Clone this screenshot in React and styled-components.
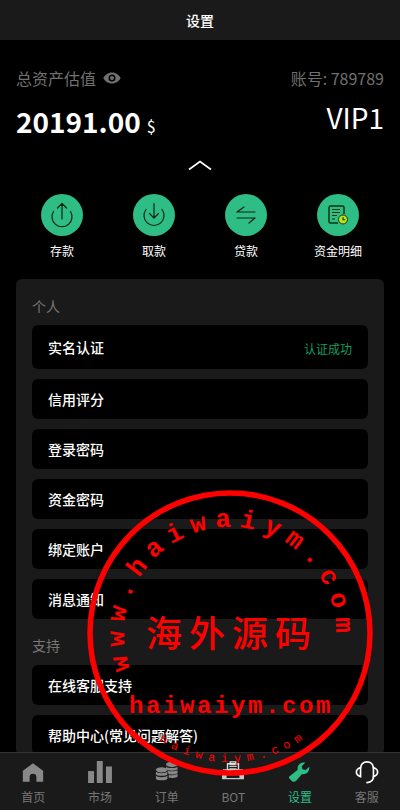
import React from "react";
import styled, { createGlobalStyle } from "styled-components";

const Global = createGlobalStyle`
  html, body { margin: 0; padding: 0; background: #000; }
  body { font-family: "Noto Sans CJK SC", "Noto Sans", sans-serif; }
  * { box-sizing: border-box; }
`;
const Page = styled.div`
  position: relative; width: 400px; height: 810px; overflow: hidden;
  display: flex; flex-direction: column; background: #000; color: #fff;
`;
const Header = styled.header`
  flex: none; height: 40px; background: #1a1a1a; display: flex; align-items: center; justify-content: center;
  font-size: 14px; font-weight: 500; color: #fff;
`;
const Main = styled.main`flex: 1; min-height: 0; overflow: hidden; padding: 0 16px;`;
const Summary = styled.section`display: flex; justify-content: space-between; padding-top: 25px;`;
const Column = styled.div`display: flex; flex-direction: column; align-items: ${p => p.$end ? "flex-end" : "flex-start"};`;
const Muted = styled.div`
  display: flex; align-items: center; gap: 7px; height: 26px; font-size: 16px; line-height: 26px; color: #707070;
`;
const Balance = styled.div`
  display: flex; align-items: baseline; gap: 6px; margin-top: 12px; height: 36px; line-height: 36px;
  font-size: 28px; font-weight: 700; color: #fff;
  small { font-size: 16px; font-weight: 400; }
`;
const Vip = styled.div`font-size: 28px; line-height: 36px; margin-top: 8px; color: #fff;`;
const Toggle = styled.div`display: flex; justify-content: center; margin-top: 20px; height: 12px;`;
const Actions = styled.nav`display: grid; grid-template-columns: repeat(4, 1fr); margin-top: 23px;`;
const Action = styled.div`display: flex; flex-direction: column; align-items: center; font-size: 12px; line-height: 18px; color: #fff;`;
const Circle = styled.div`
  width: 42px; height: 42px; border-radius: 50%; background: #2ebd85; display: flex; align-items: center; justify-content: center; margin-bottom: 6px;
`;
const Card = styled.section`
  margin-top: 19px; background: #1a1a1a; border-radius: 6px; padding: 17px 16px 0;
`;
const GroupTitle = styled.div`font-size: 14px; line-height: 20px; height: 20px; color: #777; margin-bottom: ${p => p.$gap ? "10px" : "9px"}; margin-top: ${p => p.$gap ? "16px" : "0"};`;
const Row = styled.div`
  display: flex; justify-content: space-between; align-items: center;
  height: ${p => p.$tall ? "44px" : "40px"}; margin-bottom: 10px; padding: 0 16px; background: #000; border-radius: 6px;
  font-size: 14px; font-weight: 500; color: #fff;
`;
const Status = styled.span`font-size: 12px; font-weight: 400; color: #0e9f63; margin-top: 3px;`;
const TabBar = styled.nav`
  flex: none; height: 58px; background: #1a1a1a; border-top: 1px solid #333; display: grid; grid-template-columns: repeat(6, 1fr);
`;
const Tab = styled.div`
  display: flex; flex-direction: column; align-items: center; padding-top: 6px; font-size: 12px; line-height: 16px;
  color: ${p => p.$active ? "#2ebd85" : "#777"};
`;
const TabIcon = styled.div`height: 26px; margin-bottom: 4px; display: flex; align-items: center; justify-content: center;`;
const Stamp = styled.svg`position: absolute; left: 80px; top: 483px; width: 300px; height: 300px; pointer-events: none;`;

const Eye = () => (
  <svg width="18" height="14" viewBox="0 0 18 14"><path fill="#707070" fillRule="evenodd" d="M9 1.500C5 1.500 1.900 4 .3 7c1.600 3 4.700 5.500 8.700 5.500S16.100 10 17.700 7C16.100 4 13 1.500 9 1.500zm0 9a3.500 3.500 0 110-7 3.500 3.500 0 010 7zm0-1.500a2 2 0 100-4 2 2 0 000 4z"/></svg>
);
const Chevron = () => (
  <svg width="24" height="12" viewBox="0 0 24 12"><path d="M1 10.500 12 2.500l11 8" fill="none" stroke="#fff" strokeWidth="1.600"/></svg>
);
const I = ({ children }) => (
  <svg width="26" height="26" viewBox="0 0 26 26" fill="none" stroke="#15240f" strokeWidth="1.200" strokeLinecap="round" strokeLinejoin="round">{children}</svg>
);
const Deposit = () => <I><path d="M4.500 9.500a10 10 0 1 0 17 0M13 17V1.500M8.500 6 13 1.500 17.500 6"/></I>;
const Withdraw = () => <I><path d="M5 7.500a10 10 0 1 0 16 0M13 1.500V16M8.500 11.500 13 16l4.500-4.500"/></I>;
const Loan = () => <I><path d="M4 10h18M4 10l7-5M22 16H4M22 16l-6 5"/></I>;
const Ledger = () => (
  <svg width="26" height="26" viewBox="0 0 26 26" fill="none">
    <path d="M19 12V5.500A1.500 1.500 0 0 0 17.500 4H5.500A1.500 1.500 0 0 0 4 5.500v14A1.500 1.500 0 0 0 5.500 21H13" stroke="#15330f" strokeWidth="1.500"/>
    <path d="M7 7.500h8M7 10.500h8M7 13.500h5M7 17h3" stroke="#15330f" strokeWidth="1.200"/>
    <circle cx="18" cy="17.500" r="4.500" fill="#b6e61e" stroke="#15330f" strokeWidth="1"/>
    <path d="M18 15V17.800h2.300" stroke="#15330f" strokeWidth="1.100"/>
  </svg>
);
const Home = () => (
  <svg width="22" height="21" viewBox="0 0 26 24"><path fill="#888" d="M13 1 24.500 9.500a1 1 0 0 1 .5 1V23H17v-5.500a4 4 0 0 0-8 0V23H1V10.500a1 1 0 0 1 .5-1z"/></svg>
);
const Bars = () => (
  <svg width="24" height="22" viewBox="0 0 26 24" fill="#888"><rect x="0" y="11" width="6.500" height="13"/><rect x="9.500" y="0" width="6.500" height="24"/><rect x="19.500" y="6" width="6.500" height="18"/></svg>
);
const Coins = () => (
  <svg width="23" height="22" viewBox="0 0 26 24" fill="#888">
    <ellipse cx="19" cy="3.500" rx="6.500" ry="3"/><path d="M12.500 6c1 2 12 2 13 0v3c-1 2-12 2-13 0zM14 10.500c3 1 9 1 11.500-.5v3c-1 1.500-6 2-10 1.500zM15.500 15.500c3.500.5 8 0 10-1.500v3c-1 1.500-5 2-10 1.500z"/>
    <ellipse cx="7.500" cy="9.500" rx="6.500" ry="3"/><path d="M1 11.500c1 2.500 12 2.500 13 0v3c-1 2.500-12 2.500-13 0zM1 16c1 2.500 12 2.500 13 0v3.500c-1 2.500-12 2.500-13 0z"/>
  </svg>
);
const Bot = () => (
  <svg width="24" height="22" viewBox="0 0 26 24" fill="none">
    <path d="M7 3h12v7H7zM10 1h6v3h-6z" stroke="#ddd" strokeWidth="1.500"/>
    <path d="M9 6h8M9 8.500h8" stroke="#ddd"/>
    <path fill="#ddd" d="M2 9h22v5H2zM1 14h24v6H1z" opacity=".9"/>
    <path d="M6 15.500h14v3H6z" fill="#1a1a1a"/>
  </svg>
);
const Wrench = () => (
  <svg width="23" height="22" viewBox="0 0 26 24"><path fill="#2ebd85" d="M1.500 17 11 9.500C10 5.500 13.500 .5 19.500 1.500l-4 4 .8 3.500 3.700.7 4-3.700c.8 5.500-3.500 9.500-8.500 8.500L9.500 21.500c-1.500 1.500-3 2-4.500 1.200L2 20c-1-.8-1.200-2-.5-3z"/></svg>
);
const Headset = () => (
  <svg width="24" height="25" viewBox="0 0 26 26" fill="none" stroke="#fff" strokeWidth="1.800" strokeLinecap="round">
    <path d="M6 8.500C6 4 9 1.500 13 1.500S20 4 20 8.500"/>
    <path d="M6 7.500C3 8.500 1.500 10.500 1.500 12.500S3 16.500 6 17.500zM20 7.500c3 1 4.500 3 4.500 5S23 16.500 20 17.500z"/>
    <path d="M20 17.500c0 4-3 6-7 6.500"/>
  </svg>
);

const actions = [
  ["存款", <Deposit key="d" />], ["取款", <Withdraw key="w" />], ["贷款", <Loan key="l" />], ["资金明细", <Ledger key="g" />],
];
const personal = ["信用评分", "登录密码", "资金密码", "绑定账户", "消息通知"];
const support = ["在线客服支持", "帮助中心(常见问题解答)"];
const tabs = [
  ["首页", <Home key="h" />], ["市场", <Bars key="b" />], ["订单", <Coins key="c" />], ["BOT", <Bot key="o" />], ["设置", <Wrench key="w" />, true], ["客服", <Headset key="s" />],
];

export default function App() {
  return (
    <Page>
      <Global />
      <Header>设置</Header>
      <Main>
        <Summary>
          <Column>
            <Muted>总资产估值 <Eye /></Muted>
            <Balance>20191.00<small>$</small></Balance>
          </Column>
          <Column $end>
            <Muted>账号: 789789</Muted>
            <Vip>VIP1</Vip>
          </Column>
        </Summary>
        <Toggle><Chevron /></Toggle>
        <Actions>
          {actions.map(([label, icon]) => (
            <Action key={label}><Circle>{icon}</Circle>{label}</Action>
          ))}
        </Actions>
        <Card>
          <GroupTitle>个人</GroupTitle>
          <Row $tall>实名认证<Status>认证成功</Status></Row>
          {personal.map(t => <Row key={t}>{t}</Row>)}
          <GroupTitle $gap>支持</GroupTitle>
          {support.map(t => <Row key={t}>{t}</Row>)}
        </Card>
      </Main>
      <TabBar>
        {tabs.map(([label, icon, active]) => (
          <Tab key={label} $active={active}><TabIcon>{icon}</TabIcon>{label}</Tab>
        ))}
      </TabBar>
      <Stamp viewBox="0 0 300 300">
        <defs>
          <path id="upper" d="M 50.400 186.300 A 106 106 0 1 1 253.700 172" />
          <path id="lower" d="M 79 258 A 129 129 0 0 0 235 247" />
        </defs>
        <circle cx="150" cy="150" r="140" fill="none" stroke="#f00" strokeWidth="5.500" />
        <text fill="#f00" fontFamily="'Liberation Mono', monospace" fontWeight="700" fontSize="26" letterSpacing="8">
          <textPath href="#upper">www.haiwaiym.com</textPath>
        </text>
        <text x="152" y="164" textAnchor="middle" fill="#f00" fontFamily="'Noto Sans CJK SC', serif" fontWeight="500" fontSize="36" letterSpacing="7">海外源码</text>
        <text x="151" y="230" textAnchor="middle" fill="#f00" fontFamily="'Liberation Mono', monospace" fontWeight="700" fontSize="24" letterSpacing="2.600">haiwaiym.com</text>
        <text fill="#f00" fontFamily="'Liberation Mono', monospace" fontSize="12" letterSpacing="6">
          <textPath href="#lower">haiwaiym.com</textPath>
        </text>
      </Stamp>
    </Page>
  );
}
